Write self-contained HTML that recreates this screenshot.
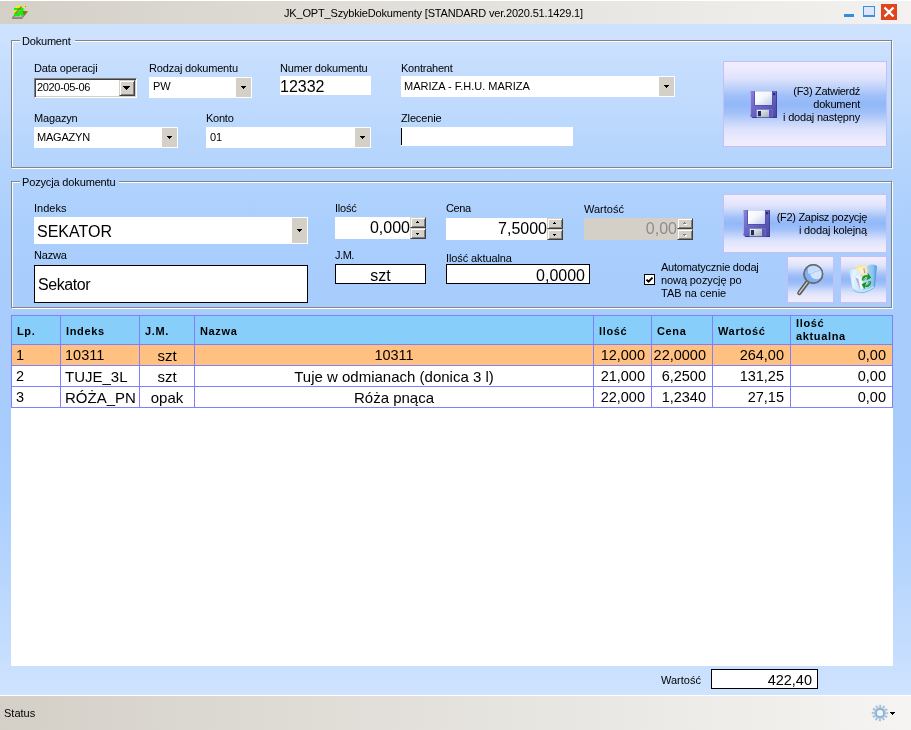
<!DOCTYPE html>
<html lang="pl">
<head>
<meta charset="utf-8">
<title>JK_OPT_SzybkieDokumenty</title>
<style>
html,body{margin:0;padding:0;}
body{width:911px;height:730px;overflow:hidden;position:relative;background:#cfe3fe;font-family:"Liberation Sans",sans-serif;font-size:11px;color:#000;}
#win{position:absolute;left:0;top:0;width:911px;height:730px;overflow:hidden;will-change:transform;}
#bg{position:absolute;left:0;top:24px;width:911px;height:671px;background:linear-gradient(to bottom,#cfe3fe 0%,#c4ddfe 7.5%,#bbd8fd 15%,#b2d3fd 22.5%,#abcffd 30%,#a8cdfd 37.5%,#a8cdfd 50%,#a8cdfd 62.5%,#abcffd 70%,#b2d3fd 77.5%,#bbd8fd 85%,#c4ddfe 92.5%,#cfe3fe 100%);}
#title{position:absolute;left:0;top:0;width:911px;height:24px;background:linear-gradient(to right,#d4d0c8 0%,#f3f2f0 100%);border-top:1px solid #fff;box-sizing:border-box;}
#ttext{position:absolute;left:284px;top:5px;width:300px;white-space:nowrap;font-size:11px;line-height:14px;letter-spacing:-0.17px;}
.t{position:absolute;white-space:nowrap;line-height:13px;font-size:11px;}
.big{position:absolute;white-space:nowrap;font-size:16px;line-height:18px;}
.gb{position:absolute;border:1px solid #848484;box-shadow:1px 1px 0 #fff, inset 1px 1px 0 #fff;box-sizing:border-box;}
.gbl{position:absolute;white-space:nowrap;line-height:13px;font-size:11px;padding:0 2px;}
.w{position:absolute;background:#fff;box-sizing:border-box;}
.bb{border:1px solid #000;}
.ddb{position:absolute;background:#d4d0c8;}
.tri{position:absolute;width:0;height:0;border-left:3px solid transparent;border-right:3px solid transparent;border-top:3px solid #000;}
.btn{position:absolute;box-sizing:border-box;border:1px solid #c8bef7;background:linear-gradient(to bottom,#f0edfd 0%,#ecebfd 8%,#dde2fc 20%,#bfd2fa 30%,#a0c0f9 40%,#92b8f8 50%,#a0c0f9 60%,#bfd2fa 70%,#dde2fc 80%,#ecebfd 92%,#f0edfd 100%);}
.spin{position:absolute;width:16px;background:#d4d0c8;}
.sb{position:absolute;left:0;width:16px;box-sizing:border-box;background:#d4d0c8;border:1px solid;border-color:#d4d0c8 #404040 #404040 #d4d0c8;box-shadow:inset 1px 1px 0 #fff, inset -1px -1px 0 #808080;}
table{border-collapse:collapse;}
#grid{position:absolute;left:11px;top:315px;width:882px;height:351px;background:#fff;}
.hc{position:absolute;top:0;height:30px;background:#87cefa;border:1px solid #8080fc;box-sizing:border-box;font-weight:bold;font-size:11px;line-height:13px;letter-spacing:0.65px;}
.hc span{position:absolute;left:5px;white-space:nowrap;}
.c{position:absolute;height:22px;border:1px solid #8080fc;box-sizing:border-box;font-size:14.5px;line-height:21px;white-space:nowrap;}
.sel{background:#ffc080;}
.a{font-size:15px;}
.r{text-align:right;padding-right:6px;}
.l{padding-left:4px;}
.m{text-align:center;}
#status{position:absolute;left:0;top:695px;width:911px;height:35px;background:linear-gradient(to right,#d4d0c8 0%,#f5f4f2 100%);border-top:1px solid #fff;box-sizing:border-box;}
</style>
</head>
<body>
<div id="win">
<div id="bg"></div>

<!-- title bar -->
<div id="title">
<svg style="position:absolute;left:11px;top:3px" width="18" height="17" viewBox="11 4 18 17">
<polygon points="11.9,18.9 22,18.9 28.1,11.5 26.2,11.2 18,11.2 12.4,16.8" fill="#868686"/>
<polygon points="13.4,17.3 21.5,17.3 26.6,11.9 19,11.9" fill="#b4b4b4"/>
<polygon points="22,10.2 27.4,11.6 25.2,14.6 23.2,15.2" fill="#808000"/>
<polygon points="15.2,6.7 19.8,4.9 21.8,6.2 16.6,8.3" fill="#f8f000"/>
<polygon points="22.3,8 26,5.1 26.1,6.7 23.1,8.7" fill="#f8f000"/>
<polygon points="14.6,9.8 19.4,9.8 15.2,14.2 14,14.2" fill="#f8f000"/>
<polygon points="14,8 23.7,8 23.3,10 14,10" fill="#10f010"/>
<polygon points="20.4,9.6 23.2,9.6 19.2,15.9 16.6,15.9" fill="#10f010"/>
<polygon points="14,13.2 19.2,13.2 19.2,15.9 14,15.9" fill="#10f010"/>
<polygon points="20.3,12 22.4,10.8 23.8,15.5 21.1,15.9" fill="#10f010"/>
<polygon points="21,6.2 22.2,6.9 15.9,13.6 14.8,12.9" fill="#8c7a14"/>
<rect x="25.1" y="6" width="0.8" height="0.8" fill="#605000"/>
</svg>
<div id="ttext">JK_OPT_SzybkieDokumenty [STANDARD ver.2020.51.1429.1]</div>
<div style="position:absolute;left:844px;top:13px;width:10px;height:3px;background:#2f8ee0"></div>
<div style="position:absolute;left:863px;top:5px;width:12px;height:11px;box-sizing:border-box;border:1px solid #3a8fe2;border-bottom-width:2px;background:#e1e5fc"></div>
<div style="position:absolute;left:881px;top:3px;width:16px;height:16px;background:#e0451c"></div>
<svg style="position:absolute;left:881px;top:3px" width="16" height="16" viewBox="0 0 16 16"><path d="M3.5 3.5 L12.5 12.5 M12.5 3.5 L3.5 12.5" stroke="#fff" stroke-width="2.4" fill="none"/></svg>
</div>

<!-- group 1 -->
<div class="gb" style="left:11px;top:40px;width:881px;height:128px;clip-path:polygon(0 0,9px 0,9px 3px,64px 3px,64px 0,883px 0,883px 130px,0 130px)"></div>
<div class="gbl" id="g1l" style="left:20px;top:35px;letter-spacing:-0.2px">Dokument</div>

<div class="t" style="left:34px;top:62px;letter-spacing:-0.1px">Data operacji</div>
<div class="t" style="left:149px;top:62px;letter-spacing:-0.18px">Rodzaj dokumentu</div>
<div class="t" style="left:280px;top:62px;letter-spacing:-0.2px">Numer dokumentu</div>
<div class="t" style="left:401px;top:62px;letter-spacing:-0.23px">Kontrahent</div>
<div class="t" style="left:34px;top:112px;letter-spacing:-0.15px">Magazyn</div>
<div class="t" style="left:206px;top:112px;letter-spacing:-0.25px">Konto</div>
<div class="t" style="left:401px;top:112px;letter-spacing:-0.14px">Zlecenie</div>

<!-- date picker -->
<div class="w" style="left:34px;top:78px;width:103px;height:20px;border:1px solid;border-color:#808080 #fff #fff #808080;box-shadow:inset 1px 1px 0 #404040, inset -1px -1px 0 #d4d0c8"></div>
<div class="t" style="left:37px;top:81px;letter-spacing:-0.33px">2020-05-06</div>
<div style="position:absolute;left:119px;top:80px;width:16px;height:16px;box-sizing:border-box;background:#d4d0c8;border:1px solid;border-color:#d4d0c8 #404040 #404040 #d4d0c8;box-shadow:inset 1px 1px 0 #fff, inset -1px -1px 0 #808080"></div>
<svg style="position:absolute;left:123px;top:86px" width="7" height="4" shape-rendering="crispEdges"><use href="#ad7" fill="#000"/></svg>

<!-- rodzaj -->
<div class="w" style="left:149px;top:77px;width:103px;height:21px"></div>
<div class="ddb" style="left:236px;top:78px;width:15px;height:19px"></div>
<svg style="position:absolute;left:241px;top:86px" width="5" height="3" shape-rendering="crispEdges"><use href="#ad5" fill="#000"/></svg>
<div class="t" style="left:153px;top:80px">PW</div>

<!-- numer -->
<div class="w" style="left:280px;top:76px;width:91px;height:19px"></div>
<div class="big" style="left:280px;top:78px">12332</div>

<!-- kontrahent -->
<div class="w" style="left:401px;top:76px;width:274px;height:21px"></div>
<div class="ddb" style="left:659px;top:77px;width:15px;height:19px"></div>
<svg style="position:absolute;left:664px;top:85px" width="5" height="3" shape-rendering="crispEdges"><use href="#ad5" fill="#000"/></svg>
<div class="t" style="left:404px;top:80px">MARIZA - F.H.U. MARIZA</div>

<!-- magazyn -->
<div class="w" style="left:34px;top:127px;width:144px;height:21px"></div>
<div class="ddb" style="left:162px;top:128px;width:15px;height:19px"></div>
<svg style="position:absolute;left:167px;top:136px" width="5" height="3" shape-rendering="crispEdges"><use href="#ad5" fill="#000"/></svg>
<div class="t" style="left:37px;top:131px;letter-spacing:-0.2px">MAGAZYN</div>

<!-- konto -->
<div class="w" style="left:206px;top:127px;width:165px;height:21px"></div>
<div class="ddb" style="left:355px;top:128px;width:15px;height:19px"></div>
<svg style="position:absolute;left:360px;top:136px" width="5" height="3" shape-rendering="crispEdges"><use href="#ad5" fill="#000"/></svg>
<div class="t" style="left:210px;top:131px">01</div>

<!-- zlecenie -->
<div class="w" style="left:401px;top:127px;width:172px;height:19px"></div>
<div style="position:absolute;left:401px;top:128px;width:1px;height:17px;background:#000"></div>

<!-- F3 button -->
<div class="btn" style="left:723px;top:61px;width:164px;height:86px"></div>
<svg style="position:absolute;left:0;top:0" width="0" height="0"><defs>
<linearGradient id="fb" x1="0" y1="0" x2="1" y2="1"><stop offset="0" stop-color="#8884dc"/><stop offset="0.5" stop-color="#6663c1"/><stop offset="1" stop-color="#4945a2"/></linearGradient>
<linearGradient id="fl" x1="0" y1="0" x2="1" y2="1"><stop offset="0" stop-color="#ffffff"/><stop offset="0.45" stop-color="#f6f8fd"/><stop offset="1" stop-color="#c2cbeb"/></linearGradient>
<linearGradient id="fs" x1="0" y1="0" x2="1" y2="1"><stop offset="0" stop-color="#f6f6f6"/><stop offset="1" stop-color="#a4acba"/></linearGradient>
<path id="ad5" d="M0 0H5V1H4V2H3V3H2V2H1V1H0Z"/><path id="ad7" d="M0 0H7V1H6V2H5V3H4V4H3V3H2V2H1V1H0Z"/><path id="au3" d="M1 0H2V1H3V2H0V1H1Z"/><path id="ad3" d="M0 0H3V1H2V2H1V1H0Z"/>
<g id="floppy">
<path d="M0.5 0 H26.5 Q27 0 27 0.5 V26.5 Q27 27 26.5 27 H2.3 L0 24.7 V0.5 Q0 0 0.5 0Z" fill="url(#fb)"/>
<rect x="0" y="0.4" width="0.9" height="23.8" fill="#b6b0f3"/>
<rect x="26.1" y="0.3" width="0.9" height="26.4" fill="#403c98"/>
<path d="M2.2 26.1 H26.8 V27 H2.6Z" fill="#3b3892"/>
<rect x="4.3" y="0" width="18.3" height="14.7" fill="#4e4aa8"/>
<rect x="5" y="0.2" width="17" height="13.8" fill="url(#fl)"/>
<rect x="23" y="2" width="2.2" height="2.2" fill="#2b2970"/>
<rect x="6.3" y="18.3" width="16.3" height="8" fill="#817ed6"/>
<rect x="19" y="18.9" width="3.1" height="7.3" fill="#5b57b6"/>
<rect x="6.9" y="18.9" width="12.1" height="7.3" fill="url(#fs)"/>
<rect x="7.9" y="20" width="3.1" height="5.2" fill="#1b2f50"/>
</g></defs></svg>
<svg style="position:absolute;left:750px;top:91px" width="27" height="27" viewBox="0 0 27 27"><use href="#floppy"/></svg>
<div class="t" style="left:723px;top:85px;width:137px;text-align:right"><span style="letter-spacing:-0.3px">(F3) Zatwierdź</span><br><span style="letter-spacing:-0.2px">dokument</span><br><span style="letter-spacing:-0.2px">i dodaj następny</span></div>

<!-- group 2 -->
<div class="gb" style="left:11px;top:181px;width:881px;height:127px;clip-path:polygon(0 0,9px 0,9px 3px,108px 3px,108px 0,883px 0,883px 129px,0 129px)"></div>
<div class="gbl" id="g2l" style="left:20px;top:176px;letter-spacing:-0.15px">Pozycja dokumentu</div>

<div class="t" style="left:34px;top:202px">Indeks</div>
<div class="t" style="left:335px;top:202px;letter-spacing:-0.2px">Ilość</div>
<div class="t" style="left:446px;top:202px;letter-spacing:-0.4px">Cena</div>
<div class="t" style="left:584px;top:203px">Wartość</div>
<div class="t" style="left:34px;top:249px;letter-spacing:-0.18px">Nazwa</div>
<div class="t" style="left:335px;top:249px;letter-spacing:-0.45px">J.M.</div>
<div class="t" style="left:446px;top:252px;letter-spacing:-0.1px">Ilość aktualna</div>

<!-- indeks combo -->
<div class="w" style="left:34px;top:217px;width:274px;height:27px"></div>
<div class="ddb" style="left:292px;top:218px;width:15px;height:25px"></div>
<svg style="position:absolute;left:297px;top:229px" width="5" height="3" shape-rendering="crispEdges"><use href="#ad5" fill="#000"/></svg>
<div class="big" style="left:37px;top:223px">SEKATOR</div>

<!-- nazwa -->
<div class="w bb" style="left:34px;top:265px;width:274px;height:38px"></div>
<div class="big" style="left:38px;top:276px;letter-spacing:-0.44px">Sekator</div>

<!-- ilosc -->
<div class="w" style="left:335px;top:217px;width:91px;height:22px"></div>
<div class="big" style="left:335px;top:219px;width:75px;text-align:right">0,000</div>
<div class="spin" style="left:410px;top:217px;height:22px"><div class="sb" style="top:0;height:11px"></div><div class="sb" style="top:11px;height:11px"></div></div>
<svg style="position:absolute;left:416px;top:221px" width="3" height="2" shape-rendering="crispEdges"><use href="#au3" fill="#000"/></svg>
<svg style="position:absolute;left:416px;top:233px" width="3" height="2" shape-rendering="crispEdges"><use href="#ad3" fill="#000"/></svg>

<!-- cena -->
<div class="w" style="left:446px;top:218px;width:117px;height:22px"></div>
<div class="big" style="left:446px;top:220px;width:101px;text-align:right">7,5000</div>
<div class="spin" style="left:547px;top:218px;height:22px"><div class="sb" style="top:0;height:11px"></div><div class="sb" style="top:11px;height:11px"></div></div>
<svg style="position:absolute;left:553px;top:222px" width="3" height="2" shape-rendering="crispEdges"><use href="#au3" fill="#000"/></svg>
<svg style="position:absolute;left:553px;top:234px" width="3" height="2" shape-rendering="crispEdges"><use href="#ad3" fill="#000"/></svg>

<!-- wartosc disabled -->
<div class="w" style="left:584px;top:218px;width:109px;height:22px;background:#d4d0c8"></div>
<div class="big" style="left:584px;top:220px;width:93px;text-align:right;color:#8e8c8e">0,00</div>
<div class="spin" style="left:677px;top:218px;height:22px"><div class="sb" style="top:0;height:11px"></div><div class="sb" style="top:11px;height:11px"></div></div>
<svg style="position:absolute;left:684px;top:223px" width="3" height="2" shape-rendering="crispEdges"><use href="#au3" fill="#fff"/></svg><svg style="position:absolute;left:683px;top:222px" width="3" height="2" shape-rendering="crispEdges"><use href="#au3" fill="#848284"/></svg>
<svg style="position:absolute;left:684px;top:235px" width="3" height="2" shape-rendering="crispEdges"><use href="#ad3" fill="#fff"/></svg><svg style="position:absolute;left:683px;top:234px" width="3" height="2" shape-rendering="crispEdges"><use href="#ad3" fill="#848284"/></svg>

<!-- jm -->
<div class="w bb" style="left:335px;top:264px;width:91px;height:20px"></div>
<div class="big" style="left:335px;top:267px;width:91px;text-align:center">szt</div>

<!-- ilosc aktualna -->
<div class="w bb" style="left:446px;top:264px;width:144px;height:20px"></div>
<div class="big" style="left:446px;top:267px;width:139px;text-align:right">0,0000</div>

<!-- checkbox -->
<div class="w bb" style="left:644px;top:274px;width:11px;height:11px"></div>
<svg style="position:absolute;left:644px;top:274px" width="11" height="11" viewBox="0 0 11 11"><path d="M2.5 5.6 L4.5 7.6 L8.5 3.6" stroke="#000" stroke-width="2" fill="none"/></svg>
<div class="t" style="left:661px;top:261px"><span style="letter-spacing:-0.24px">Automatycznie dodaj</span><br><span style="letter-spacing:-0.1px">nową pozycję po</span><br>TAB na cenie</div>

<!-- F2 button -->
<div class="btn" style="left:723px;top:194px;width:164px;height:59px"></div>
<svg style="position:absolute;left:743px;top:210px" width="27" height="27" viewBox="0 0 27 27"><use href="#floppy"/></svg>
<div class="t" style="left:723px;top:211px;width:144px;text-align:right"><span style="letter-spacing:-0.3px">(F2) Zapisz pozycję</span><br><span style="letter-spacing:-0.15px">i dodaj kolejną</span></div>

<!-- search button -->
<div class="btn" style="left:787px;top:256px;width:47px;height:47px"></div>
<svg style="position:absolute;left:787px;top:256px" width="47" height="46" viewBox="0 0 47 46">
<defs><clipPath id="lc"><circle cx="26.3" cy="18" r="8.7"/></clipPath>
<linearGradient id="hg" x1="0" y1="0" x2="1" y2="1"><stop offset="0" stop-color="#6a6a6a"/><stop offset="1" stop-color="#4c4c4c"/></linearGradient></defs>
<path d="M20.8 25.6 L12.4 37" stroke="#585858" stroke-width="4.4" stroke-linecap="round"/>
<path d="M20.2 26.4 L12.2 37" stroke="#cfcfcf" stroke-width="1.3" stroke-linecap="round"/>
<circle cx="26.3" cy="18" r="9.3" fill="#7eb2f5" stroke="#6c6c6c" stroke-width="1.5"/>
<g clip-path="url(#lc)">
<circle cx="29.7" cy="16.2" r="7" fill="#d3e5fc"/>
<path d="M21 18 Q28 13 36 12 L36 8 L21 8Z" fill="#c3dcfc"/>
<path d="M21.6 19.4 Q28 14.6 35.6 13.6" stroke="#8fbdf6" stroke-width="0.7" fill="none"/>
</g>
<circle cx="26.3" cy="18" r="9.3" fill="none" stroke="#6c6c6c" stroke-width="1.5"/>
</svg>

<!-- recycle button -->
<div class="btn" style="left:840px;top:256px;width:47px;height:47px"></div>
<svg style="position:absolute;left:839.6px;top:256px" width="46" height="46" viewBox="0 0 46 46">
<defs><linearGradient id="bn" x1="0" y1="0" x2="1" y2="0.25"><stop offset="0" stop-color="#b6dcf6"/><stop offset="0.3" stop-color="#e9f8fe"/><stop offset="0.75" stop-color="#cfeafa"/><stop offset="1" stop-color="#a9d6f5"/></linearGradient>
<linearGradient id="bk" x1="0" y1="0" x2="1" y2="0"><stop offset="0" stop-color="#b4daf6"/><stop offset="0.7" stop-color="#8cc4f0"/><stop offset="1" stop-color="#5a9fde"/></linearGradient></defs>
<path d="M28 9.6 Q32.4 7.2 36.5 9.8 L34.4 31 Q30 34.6 24 36 L24 18Z" fill="url(#bk)"/>
<path d="M15.7 11 L17.4 9.6 L18.8 10.4 L20.4 8.8 L22 9.6 L23.8 8.2 L24.8 9 L26 8.2 L27.9 14.8 L26.4 19 L21 20.6 L16.7 16.2Z" fill="#fbe59a"/>
<path d="M17.6 12.4 L25 10.2 L26.6 15 L21.4 19Z" fill="#fdf2c4"/>
<path d="M23.2 12.2 L24.4 11.8 L25.6 16.4 L24.2 17.4Z" fill="#aaa2d6"/>
<path d="M9.2 14.2 Q13 12.6 17 13.6 L21 18 L24.4 20 L24 36.2 Q17 36.8 12.8 33.4Z" fill="url(#bn)" opacity="0.95"/>
<path d="M12.8 33.4 Q17 37.4 24 36.2 Q30 34.8 34.3 31.2 L34.5 29.4 Q29 33.4 22 34.2 Q16 34.6 12.4 31.4Z" fill="#bfe6f8"/>
<path d="M12.9 33.6 Q17 37.6 24 36.5 Q30 35 34.3 31.4" stroke="#6aa8dc" stroke-width="0.7" fill="none"/>
<path d="M15.3 21.4 L21 17.6 L23.4 21 L22.6 32.8 L20.4 34.2Z" fill="#f6f6fb"/>
<path d="M15.3 21.4 L18.4 22.8 L20.6 33.8 L20.4 34.2Z" fill="#b4aedb"/>
<path d="M19.4 21.2 L21 17.6 L23.4 21Z" fill="#d9d6ee"/>
<path d="M21.6 24.4 Q22 18.6 27.6 19.4 L28 17 L31.2 21.8 L26.4 24.2 L27 22 Q24.4 21.6 24.2 24.6Z" fill="#0e951d"/>
<path d="M31.2 25.4 Q30.8 31.6 25 30.8 L24.6 33.2 L21.6 28.2 L26.4 26 L25.8 28.2 Q28.4 28.6 28.6 25.2Z" fill="#0e951d"/>
<path d="M23.2 23.6 Q24.6 20.8 27.6 21.2" stroke="#c9ecd0" stroke-width="0.8" fill="none"/>
<path d="M29.6 26.4 Q28.4 29.4 25.2 29.2" stroke="#c9ecd0" stroke-width="0.8" fill="none"/>
<path d="M36.5 9.8 L34.4 31" stroke="#4f97d8" stroke-width="0.9" fill="none"/>
</svg>

<!-- grid -->
<div id="grid">
<div class="hc" style="left:0;width:50px"><span style="top:9px">Lp.</span></div>
<div class="hc" style="left:49px;width:80px"><span style="top:9px">Indeks</span></div>
<div class="hc" style="left:128px;width:56px"><span style="top:9px">J.M.</span></div>
<div class="hc" style="left:183px;width:400px"><span style="top:9px">Nazwa</span></div>
<div class="hc" style="left:582px;width:59px"><span style="top:9px">Ilość</span></div>
<div class="hc" style="left:640px;width:62px"><span style="top:9px">Cena</span></div>
<div class="hc" style="left:701px;width:79px"><span style="top:9px">Wartość</span></div>
<div class="hc" style="left:779px;width:103px"><span style="top:1px">Ilość<br>aktualna</span></div>

<div class="c sel l" style="left:0;top:29px;width:50px">1</div>
<div class="c sel l" style="left:49px;top:29px;width:80px">10311</div>
<div class="c sel m a" style="left:128px;top:29px;width:56px">szt</div>
<div class="c sel m" style="left:183px;top:29px;width:400px">10311</div>
<div class="c sel r" style="left:582px;top:29px;width:59px">12,000</div>
<div class="c sel r" style="left:640px;top:29px;width:62px">22,0000</div>
<div class="c sel r" style="left:701px;top:29px;width:79px">264,00</div>
<div class="c sel r" style="left:779px;top:29px;width:103px">0,00</div>

<div class="c l" style="left:0;top:50px;width:50px">2</div>
<div class="c l a" style="left:49px;top:50px;width:80px">TUJE_3L</div>
<div class="c m a" style="left:128px;top:50px;width:56px">szt</div>
<div class="c m a" style="left:183px;top:50px;width:400px">Tuje w odmianach (donica 3 l)</div>
<div class="c r" style="left:582px;top:50px;width:59px">21,000</div>
<div class="c r" style="left:640px;top:50px;width:62px">6,2500</div>
<div class="c r" style="left:701px;top:50px;width:79px">131,25</div>
<div class="c r" style="left:779px;top:50px;width:103px">0,00</div>

<div class="c l" style="left:0;top:71px;width:50px">3</div>
<div class="c l a" style="left:49px;top:71px;width:80px">RÓŻA_PN</div>
<div class="c m a" style="left:128px;top:71px;width:56px">opak</div>
<div class="c m a" style="left:183px;top:71px;width:400px">Róża pnąca</div>
<div class="c r" style="left:582px;top:71px;width:59px">22,000</div>
<div class="c r" style="left:640px;top:71px;width:62px">1,2340</div>
<div class="c r" style="left:701px;top:71px;width:79px">27,15</div>
<div class="c r" style="left:779px;top:71px;width:103px">0,00</div>
</div>

<!-- total -->
<div class="t" style="left:661px;top:674px">Wartość</div>
<div class="w bb" style="left:711px;top:669px;width:107px;height:20px"></div>
<div class="big" style="left:711px;top:671px;width:101px;text-align:right;font-size:14.5px">422,40</div>

<!-- status -->
<div id="status">
<div class="t" style="left:4px;top:11px">Status</div>
<svg style="position:absolute;left:871px;top:8px" width="18" height="18" viewBox="0 0 18 18">
<circle cx="9" cy="9" r="7" fill="none" stroke="#a2bfdd" stroke-width="2.4" stroke-dasharray="1.9 1.765" stroke-dashoffset="0.95"/>
<circle cx="9" cy="9" r="6" fill="#abc7e3"/>
<circle cx="9" cy="9" r="3.9" fill="none" stroke="#86a8d0" stroke-width="1.3"/>
<circle cx="9" cy="9" r="3.1" fill="#f4f3f1"/>
</svg>
<svg style="position:absolute;left:890px;top:16px" width="5" height="3" shape-rendering="crispEdges"><use href="#ad5" fill="#000"/></svg>
</div>

</div>
</body>
</html>
